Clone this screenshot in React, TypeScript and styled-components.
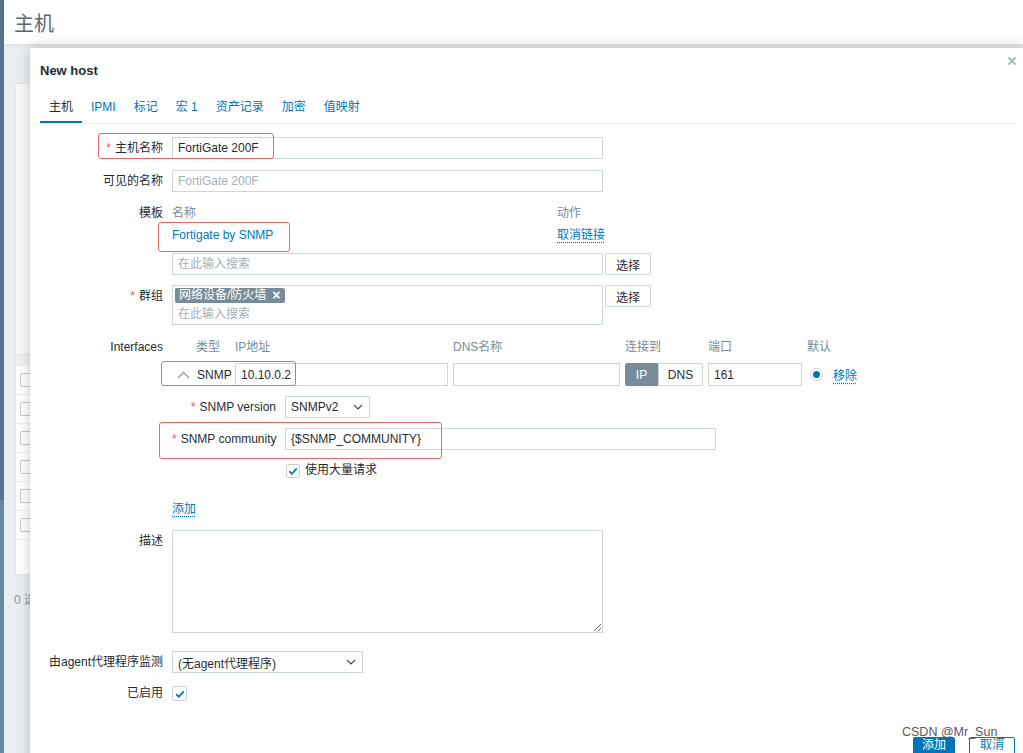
import React from 'react';
import styled, { createGlobalStyle } from 'styled-components';

const GlobalStyle = createGlobalStyle`
  html, body { margin: 0; padding: 0; overflow: hidden; }
  body {
    font-family: "Liberation Sans", Arial, "Noto Sans CJK SC", sans-serif;
    font-size: 12px;
    color: #1f2c33;
    background: #ebeef0;
  }
  * { box-sizing: border-box; }
`;

const Page = styled.div`
  position: relative;
  width: 1023px;
  height: 753px;
  overflow: hidden;
  display: flex;
  background: #ebeef0;
`;

const Sidebar = styled.div`
  width: 4px;
  flex: none;
  display: flex;
  flex-direction: column;
`;

const SidebarPart = styled.div<{ $h?: number; $c: string }>`
  background: ${(p) => p.$c};
  height: ${(p) => (p.$h ? `${p.$h}px` : 'auto')};
  flex: ${(p) => (p.$h ? 'none' : '1')};
`;

const Main = styled.div`
  flex: 1;
  display: flex;
  flex-direction: column;
`;

const Header = styled.header`
  height: 44px;
  flex: none;
  background: #fff;
  display: flex;
  align-items: center;
  padding-left: 10px;
  box-shadow: 0 1px 4px rgba(0, 0, 0, 0.08);
`;

const PageTitle = styled.h1`
  margin: 0;
  font-size: 20px;
  font-weight: normal;
  color: #5d6870;
`;

const Content = styled.div`
  padding: 39px 0 0 11px;
`;

const ListPanel = styled.div`
  width: 990px;
  height: 492px;
  background: #fff;
  border: 1px solid #e1e6e9;
  display: flex;
  flex-direction: column;
`;

const FilterArea = styled.div`
  height: 271px;
  flex: none;
  background: #f7f8f9;
  border-bottom: 1px solid #e1e6e9;
`;

const ListHead = styled.div`
  height: 11px;
  background: #eef1f3;
`;

const ListRow = styled.div`
  height: 29px;
  display: flex;
  align-items: center;
  padding-left: 4px;
  border-bottom: 1px solid #ebeef0;
`;

const ListCheck = styled.span`
  width: 14px;
  height: 14px;
  border: 1px solid #c5cdd2;
  border-radius: 2px;
  background: #fff;
`;

const ListFooter = styled.div`
  margin-top: 15px;
  margin-left: -1px;
  color: #8a98a0;
`;

const Modal = styled.div`
  position: absolute;
  left: 30px;
  top: 48px;
  width: 995px;
  height: 730px;
  background: #fff;
  box-shadow: 0 0 12px rgba(0, 0, 0, 0.22);
  padding: 0 10px;
`;

const ModalTitle = styled.h4`
  margin: 0;
  padding-top: 15px;
  font-size: 13px;
  line-height: 16px;
  font-weight: bold;
  color: #1f2c33;
`;

const CloseButton = styled.span`
  position: absolute;
  top: 8px;
  right: 8px;
  width: 10px;
  height: 10px;
  display: flex;
`;

const TabList = styled.div`
  margin-top: 14px;
  display: flex;
  border-bottom: 1px solid #ebeef0;
`;

const Tab = styled.div<{ $active?: boolean }>`
  padding: 0 9px;
  height: 30px;
  line-height: 29px;
  color: ${(p) => (p.$active ? '#1f2c33' : '#0275b8')};
  border-bottom: 2px solid ${(p) => (p.$active ? '#0275b8' : 'transparent')};
  white-space: nowrap;
`;

const Form = styled.div`
  padding-top: 13px;
`;

const FormRow = styled.div<{ $mt: number }>`
  display: grid;
  grid-template-columns: 123px 1fr;
  column-gap: 9px;
  margin-top: ${(p) => p.$mt}px;
  align-items: start;
`;

const Label = styled.div<{ $lh?: number }>`
  text-align: right;
  white-space: nowrap;
  line-height: ${(p) => p.$lh ?? 22}px;
  height: ${(p) => p.$lh ?? 22}px;
  color: #1f2c33;
`;

const Star = styled.span`
  color: #e45959;
  margin-right: 4px;
`;

const FieldLine = styled.div<{ $gap?: number }>`
  display: flex;
  align-items: flex-start;
  gap: ${(p) => p.$gap ?? 2}px;
`;

const LinkLine = styled.div`
  line-height: 14px;
  height: 14px;
`;

const TextInput = styled.input<{ $w: number; $h?: number }>`
  width: ${(p) => p.$w}px;
  height: ${(p) => p.$h ?? 22}px;
  border: 1px solid #cdd6da;
  border-radius: 0;
  padding: 0 5px;
  margin: 0;
  font: inherit;
  color: #1f2c33;
  background: #fff;
  outline: none;
  &::placeholder { color: #a3b1b8; opacity: 1; }
`;

const TextArea = styled.textarea`
  width: 431px;
  height: 103px;
  border: 1px solid #cdd6da;
  margin: 0;
  padding: 4px 5px;
  font: inherit;
  display: block;
  outline: none;
`;

const SecondaryButton = styled.button`
  width: 46px;
  height: 22px;
  border: 1px solid #cdd6da;
  border-radius: 2px;
  background: #fff;
  color: #1f2c33;
  font: inherit;
  padding: 0;
  margin: 0;
`;

const TemplateTable = styled.div`
  width: 433px;
  display: grid;
  grid-template-columns: 385px 48px;
  row-gap: 8px;
  line-height: 14px;
`;

const ColHead = styled.div`
  color: #768d99;
  white-space: nowrap;
  height: 14px;
`;

const Link = styled.span`
  color: #0275b8;
  white-space: nowrap;
  height: 14px;
`;

const ActionLink = styled.span`
  color: #0275b8;
  white-space: nowrap;
  text-decoration: underline dotted #0275b8;
  text-underline-offset: 3px;
`;

const MultiSelect = styled.div`
  width: 431px;
  height: 40px;
  border: 1px solid #cdd6da;
  padding: 2px;
  background: #fff;
`;

const Tag = styled.span`
  display: inline-flex;
  align-items: center;
  gap: 6px;
  height: 15px;
  line-height: 15px;
  padding: 0 4px;
  background: #768d99;
  color: #fff;
  border-radius: 2px;
  vertical-align: top;
`;

const TagClose = styled.span`
  font-weight: bold;
  font-size: 14px;
`;

const MultiPlaceholder = styled.div`
  margin-top: 4px;
  padding-left: 3px;
  line-height: 14px;
  color: #a3b1b8;
`;

const InterfaceGrid = styled.div`
  display: grid;
  grid-template-columns: 19px 34px 213px 167px 78px 94px auto;
  column-gap: 5px;
  row-gap: 9px;
  align-items: center;
`;

const IfaceHead = styled.div`
  color: #768d99;
  line-height: 14px;
  height: 14px;
  white-space: nowrap;
`;

const ChevronCell = styled.div`
  display: flex;
  justify-content: flex-end;
  padding-right: 1px;
`;

const TypeCell = styled.div`
  white-space: nowrap;
  padding-left: 1px;
`;

const Toggle = styled.div`
  display: flex;
  height: 23px;
`;

const ToggleItem = styled.span<{ $w: number; $on?: boolean }>`
  width: ${(p) => p.$w}px;
  display: flex;
  align-items: center;
  justify-content: center;
  border: 1px solid ${(p) => (p.$on ? '#768d99' : '#cdd6da')};
  background: ${(p) => (p.$on ? '#768d99' : '#fff')};
  color: ${(p) => (p.$on ? '#fff' : '#1f2c33')};
  border-radius: ${(p) => (p.$on ? '2px 0 0 2px' : '0 2px 2px 0')};
`;

const DefaultCell = styled.div`
  display: flex;
  align-items: center;
  gap: 10px;
  padding-left: 3px;
`;

const Radio = styled.span`
  width: 13px;
  height: 13px;
  border-radius: 50%;
  border: 1px solid #c8d1d6;
  display: flex;
  align-items: center;
  justify-content: center;
  &::after {
    content: '';
    width: 7px;
    height: 7px;
    border-radius: 50%;
    background: #0275b8;
  }
`;

const SubForm = styled.div`
  grid-column: 1 / -1;
  display: grid;
  grid-template-columns: 104px 1fr;
  column-gap: 9px;
  row-gap: 10px;
  margin-top: 1px;
`;

const Select = styled.div<{ $w: number }>`
  width: ${(p) => p.$w}px;
  height: 22px;
  border: 1px solid #cdd6da;
  background: #fff;
  display: flex;
  align-items: center;
  justify-content: space-between;
  padding: 0 6px 0 5px;
  white-space: nowrap;
`;

const CheckLine = styled.div<{ $mt?: number; $pl?: number }>`
  display: flex;
  align-items: center;
  gap: 5px;
  height: 15px;
  line-height: 15px;
  margin-top: ${(p) => p.$mt ?? 0}px;
  padding-left: ${(p) => p.$pl ?? 0}px;
`;

const CheckBox = styled.span<{ $s: number }>`
  width: ${(p) => p.$s}px;
  height: ${(p) => p.$s}px;
  flex: none;
  border: 1px solid #c8d1d6;
  border-radius: 2px;
  background: #fff;
  display: flex;
  align-items: center;
  justify-content: center;
`;

const ModalFooter = styled.div`
  margin-top: 36px;
  display: flex;
  justify-content: flex-end;
  gap: 14px;
`;

const PrimaryButton = styled.button`
  width: 42px;
  height: 25px;
  border: 1px solid #0275b8;
  border-radius: 2px;
  background: #0275b8;
  color: #fff;
  font: inherit;
  line-height: 12px;
  padding: 1px 0 0;
  display: flex;
  align-items: flex-start;
  justify-content: center;
`;

const OutlineButton = styled(PrimaryButton)`
  width: 46px;
  background: #fff;
  color: #0275b8;
`;

const Annotation = styled.div<{ $x: number; $y: number; $w: number; $h: number }>`
  position: absolute;
  left: ${(p) => p.$x}px;
  top: ${(p) => p.$y}px;
  width: ${(p) => p.$w}px;
  height: ${(p) => p.$h}px;
  border: 1.5px solid #ee6666;
  border-radius: 3px;
  pointer-events: none;
`;

const Watermark = styled.div`
  position: absolute;
  left: 902px;
  top: 725px;
  font-size: 12.5px;
  color: #5a5a5a;
  white-space: nowrap;
`;

const Check = ({ size }: { size: number }) => (
  <svg width={size} height={size} viewBox="0 0 12 12">
    <path d="M2.2 6.2 L4.8 8.8 L9.8 3.4" fill="none" stroke="#0275b8" strokeWidth="1.8" />
  </svg>
);

const ChevronDown = () => (
  <svg width="10" height="6" viewBox="0 0 10 6">
    <path d="M1 1 L5 5 L9 1" fill="none" stroke="#3b4a52" strokeWidth="1.1" />
  </svg>
);

const ChevronUp = () => (
  <svg width="13" height="8" viewBox="0 0 13 8">
    <path d="M1 7 L6.5 1.5 L12 7" fill="none" stroke="#a0adb4" strokeWidth="1.6" />
  </svg>
);

const CloseIcon = () => (
  <svg width="10" height="10" viewBox="0 0 10 10">
    <path d="M1.5 1.5 L8.5 8.5 M8.5 1.5 L1.5 8.5" stroke="#a9b4ba" strokeWidth="2" />
  </svg>
);

const tabs = ['主机', 'IPMI', '标记', '宏 1', '资产记录', '加密', '值映射'];

export default function App() {
  return (
    <>
      <GlobalStyle />
      <Page>
        <Sidebar>
          <SidebarPart $h={500} $c="#56758b" />
          <SidebarPart $c="#6589a3" />
        </Sidebar>
        <Main>
          <Header>
            <PageTitle>主机</PageTitle>
          </Header>
          <Content>
            <ListPanel>
              <FilterArea />
              <ListHead />
              {[0, 1, 2, 3, 4, 5].map((i) => (
                <ListRow key={i}>
                  <ListCheck />
                </ListRow>
              ))}
            </ListPanel>
            <ListFooter>0 选择</ListFooter>
          </Content>
        </Main>

        <Modal>
          <ModalTitle>New host</ModalTitle>
          <CloseButton>
            <CloseIcon />
          </CloseButton>
          <TabList>
            {tabs.map((t, i) => (
              <Tab key={t} $active={i === 0}>
                {t}
              </Tab>
            ))}
          </TabList>

          <Form>
            <FormRow $mt={0}>
              <Label>
                <Star>*</Star>主机名称
              </Label>
              <TextInput $w={431} defaultValue="FortiGate 200F" />
            </FormRow>

            <FormRow $mt={11}>
              <Label>可见的名称</Label>
              <TextInput $w={431} placeholder="FortiGate 200F" />
            </FormRow>

            <FormRow $mt={14}>
              <Label $lh={14}>模板</Label>
              <TemplateTable>
                <ColHead>名称</ColHead>
                <ColHead>动作</ColHead>
                <Link>Fortigate by SNMP</Link>
                <ActionLink>取消链接</ActionLink>
              </TemplateTable>
            </FormRow>

            <FormRow $mt={11}>
              <Label />
              <FieldLine>
                <TextInput $w={431} placeholder="在此输入搜索" />
                <SecondaryButton>选择</SecondaryButton>
              </FieldLine>
            </FormRow>

            <FormRow $mt={10}>
              <Label>
                <Star>*</Star>群组
              </Label>
              <FieldLine>
                <MultiSelect>
                  <Tag>
                    网络设备/防火墙<TagClose>×</TagClose>
                  </Tag>
                  <MultiPlaceholder>在此输入搜索</MultiPlaceholder>
                </MultiSelect>
                <SecondaryButton>选择</SecondaryButton>
              </FieldLine>
            </FormRow>

            <FormRow $mt={15}>
              <Label $lh={14}>Interfaces</Label>
              <InterfaceGrid>
                <span />
                <IfaceHead>类型</IfaceHead>
                <IfaceHead>IP地址</IfaceHead>
                <IfaceHead>DNS名称</IfaceHead>
                <IfaceHead>连接到</IfaceHead>
                <IfaceHead>端口</IfaceHead>
                <IfaceHead>默认</IfaceHead>

                <ChevronCell>
                  <ChevronUp />
                </ChevronCell>
                <TypeCell>SNMP</TypeCell>
                <TextInput $w={213} $h={23} defaultValue="10.10.0.2" />
                <TextInput $w={167} $h={23} />
                <Toggle>
                  <ToggleItem $w={33} $on>
                    IP
                  </ToggleItem>
                  <ToggleItem $w={45}>DNS</ToggleItem>
                </Toggle>
                <TextInput $w={94} $h={23} defaultValue="161" />
                <DefaultCell>
                  <Radio />
                  <ActionLink>移除</ActionLink>
                </DefaultCell>

                <SubForm>
                  <Label>
                    <Star>*</Star>SNMP version
                  </Label>
                  <Select $w={85}>
                    SNMPv2
                    <ChevronDown />
                  </Select>
                  <Label>
                    <Star>*</Star>SNMP community
                  </Label>
                  <TextInput $w={431} defaultValue="{$SNMP_COMMUNITY}" />
                  <span />
                  <CheckLine $mt={3} $pl={1}>
                    <CheckBox $s={14}>
                      <Check size={12} />
                    </CheckBox>
                    使用大量请求
                  </CheckLine>
                </SubForm>
              </InterfaceGrid>
            </FormRow>

            <FormRow $mt={24}>
              <span />
              <LinkLine>
                <ActionLink>添加</ActionLink>
              </LinkLine>
            </FormRow>

            <FormRow $mt={14}>
              <Label>描述</Label>
              <TextArea />
            </FormRow>

            <FormRow $mt={18}>
              <Label>由agent代理程序监测</Label>
              <Select $w={191}>
                (无agent代理程序)
                <ChevronDown />
              </Select>
            </FormRow>

            <FormRow $mt={13}>
              <Label $lh={15}>已启用</Label>
              <CheckLine>
                <CheckBox $s={15}>
                  <Check size={12} />
                </CheckBox>
              </CheckLine>
            </FormRow>

            <ModalFooter>
              <PrimaryButton>添加</PrimaryButton>
              <OutlineButton>取消</OutlineButton>
            </ModalFooter>
          </Form>
        </Modal>

        <Annotation $x={98} $y={133} $w={176} $h={26} />
        <Annotation $x={158} $y={222} $w={132} $h={30} />
        <Annotation $x={161} $y={361} $w={135} $h={25} />
        <Annotation $x={159} $y={422} $w={283} $h={37} />

        <Watermark>CSDN @Mr_Sun_</Watermark>
      </Page>
    </>
  );
}
